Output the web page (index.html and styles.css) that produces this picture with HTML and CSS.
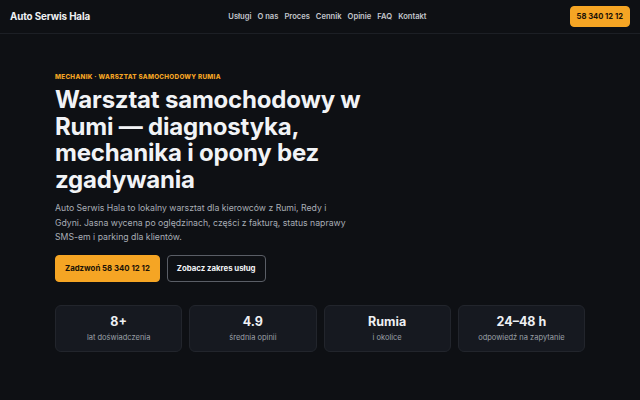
FILE: index.html
```html
<!DOCTYPE html>
<html lang="pl">
    <head>
        <meta charset="utf-8">
        <link rel="stylesheet" href="styles.css">
    </head>
    <body>
        <header class="top">
            <a class="logo" href="#">Auto Serwis Hala</a>
            <nav class="nav">
                <a href="#">Usługi</a>
                <a href="#">O nas</a>
                <a href="#">Proces</a>
                <a href="#">Cennik</a>
                <a href="#">Opinie</a>
                <a href="#">FAQ</a>
                <a href="#">Kontakt</a>
            </nav>
            <a class="btn btn-main btn-small" href="#">58 340 12 12</a>
        </header>

        <main class="wrap">
            <section class="hero">
                <p class="eyebrow">Mechanik · warsztat samochodowy Rumia</p>
                <h1>Warsztat samochodowy w Rumi — diagnostyka, mechanika i opony bez zgadywania</h1>
                <p class="lead">Auto Serwis Hala to lokalny warsztat dla kierowców z Rumi, Redy i Gdyni. Jasna wycena po oględzinach, części z fakturą, status naprawy SMS-em i parking dla klientów.</p>
                <div class="actions">
                    <a class="btn btn-main" href="#">Zadzwoń 58 340 12 12</a>
                    <a class="btn btn-line" href="#">Zobacz zakres usług</a>
                </div>
            </section>

            <section class="stats">
                <div class="stat">
                    <strong>8+</strong>
                    <span>lat doświadczenia</span>
                </div>
                <div class="stat">
                    <strong>4.9</strong>
                    <span>średnia opinii</span>
                </div>
                <div class="stat">
                    <strong>Rumia</strong>
                    <span>i okolice</span>
                </div>
                <div class="stat">
                    <strong>24–48 h</strong>
                    <span>odpowiedź na zapytanie</span>
                </div>
            </section>
        </main>
    </body>
</html>
```

FILE: styles.css
```css
*{
	margin: 0;
	padding: 0;
	box-sizing: border-box;
}
body{
	background: #0e1014;
	color: #eef0f3;
	font-family: "Inter", "Liberation Sans", sans-serif;
}
a{
	color: inherit;
	text-decoration: none;
}
.top{
	height: 34px;
	display: flex;
	align-items: center;
	padding: 0 10px;
	border-bottom: 1px solid #1c1f25;
}
.logo{
	font-size: 9.8px;
	font-weight: 700;
	letter-spacing: -0.1px;
	flex: 1;
}
.nav{
	display: flex;
	gap: 6px;
	font-size: 7.6px;
	font-weight: 600;
	color: #c4c7cd;
	margin-right: 143px;
}
.btn{
	display: inline-flex;
	align-items: center;
	justify-content: center;
	border-radius: 4px;
	font-weight: 700;
	font-size: 7.8px;
}
.btn-main{
	background: #f5a524;
	color: #1a1206;
	border: 1px solid #f5a524;
}
.btn-small{
	height: 21px;
	padding: 0 6px;
	margin-top: -1px;
	font-size: 7.6px;
}
.wrap{
	width: 530px;
	margin: 0 auto;
}
.hero{
	padding-top: 39px;
	width: 312px;
}
.eyebrow{
	color: #f5a524;
	font-size: 6.3px;
	font-weight: 800;
	letter-spacing: 0.3px;
	text-transform: uppercase;
	margin-bottom: 6px;
}
h1{
	font-size: 24px;
	line-height: 26.5px;
	font-weight: 700;
	letter-spacing: -0.2px;
	color: #f1f3f6;
	margin-bottom: 8px;
}
.lead{
	width: 298px;
	font-size: 8.7px;
	line-height: 14.5px;
	color: #a9aeb6;
	margin-bottom: 10px;
}
.actions{
	display: flex;
	gap: 7px;
}
.actions .btn{
	height: 27px;
	padding: 0 9px;
}
.btn-line{
	border: 1px solid #5a5e66;
	color: #f1f3f6;
}
.stats{
	display: grid;
	grid-template-columns: repeat(4, 1fr);
	gap: 7px;
	margin-top: 23px;
}
.stat{
	height: 47px;
	background: #161920;
	border: 1px solid #22252c;
	border-radius: 6px;
	display: flex;
	flex-direction: column;
	align-items: center;
	justify-content: center;
	gap: 4px;
}
.stat strong{
	font-size: 12.5px;
	font-weight: 700;
}
.stat span{
	font-size: 7.5px;
	color: #9ca1a9;
}
```
